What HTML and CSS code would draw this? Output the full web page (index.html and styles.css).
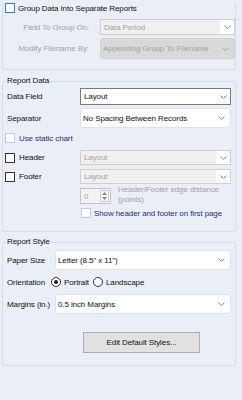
FILE: index.html
```html
<!DOCTYPE html>
<html lang="en">
  <head>
    <meta charset="UTF-8" />
    <title>Report Settings</title>
    <link rel="stylesheet" href="styles.css">
  </head>
  <body>
    <div class="group group-top">
      <div class="check-row top-check">
        <span class="box box-focus"></span>
        <span>Group Data Into Separate Reports</span>
      </div>
      <div class="row row-field">
        <span class="lbl-right dis">Field To Group On:</span>
        <div class="combo combo-std-dis">
          <span class="val dis">Data Period</span>
          <span class="arrow-area">
            <svg class="chev" viewBox="0 0 7 4" width="7" height="4"><path d="M0.5 0.5 L3.5 3.5 L6.5 0.5" /></svg>
          </span>
        </div>
      </div>
      <div class="row row-modify">
        <span class="lbl-right dis">Modify Filename By:</span>
        <div class="combo combo-list-dis">
          <span class="val dis">Appending Group To Filename</span>
          <svg class="chev" viewBox="0 0 7 4" width="7" height="4"><path d="M0.5 0.5 L3.5 3.5 L6.5 0.5" /></svg>
        </div>
      </div>
    </div>

    <fieldset class="group group-data">
      <legend>Report Data</legend>
      <div class="row row-datafield">
        <span class="lbl">Data Field</span>
        <div class="combo combo-active">
          <span class="val">Layout</span>
          <svg class="chev" viewBox="0 0 7 4" width="7" height="4"><path d="M0.5 0.5 L3.5 3.5 L6.5 0.5" /></svg>
        </div>
      </div>
      <div class="row row-sep">
        <span class="lbl">Separator</span>
        <div class="combo combo-round">
          <span class="val">No Spacing Between Records</span>
          <svg class="chev" viewBox="0 0 7 4" width="7" height="4"><path d="M0.5 0.5 L3.5 3.5 L6.5 0.5" /></svg>
        </div>
      </div>
      <div class="check-row static-check">
        <span class="box box-light"></span>
        <span class="blue">Use static chart</span>
      </div>
      <div class="row row-hf row-header">
        <span class="check-lbl"><span class="box"></span>Header</span>
        <div class="combo combo-std-dis">
          <span class="val dis">Layout</span>
          <span class="arrow-area">
            <svg class="chev" viewBox="0 0 7 4" width="7" height="4"><path d="M0.5 0.5 L3.5 3.5 L6.5 0.5" /></svg>
          </span>
        </div>
      </div>
      <div class="row row-hf row-footer">
        <span class="check-lbl"><span class="box"></span>Footer</span>
        <div class="combo combo-std-dis">
          <span class="val dis">Layout</span>
          <span class="arrow-area">
            <svg class="chev" viewBox="0 0 7 4" width="7" height="4"><path d="M0.5 0.5 L3.5 3.5 L6.5 0.5" /></svg>
          </span>
        </div>
      </div>
      <div class="spin-row">
        <div class="spin">
          <span class="dis">0</span>
          <span class="spin-btns">
            <svg viewBox="0 0 5 3" width="5" height="3"><path d="M2.5 0 L5 3 L0 3 Z" /></svg>
            <svg viewBox="0 0 5 3" width="5" height="3"><path d="M0 0 L5 0 L2.5 3 Z" /></svg>
          </span>
        </div>
        <div class="spin-text dis">Header/Footer edge distance<br />(points)</div>
      </div>
      <div class="check-row first-check">
        <span class="box box-light"></span>
        <span class="blue">Show header and footer on first page</span>
      </div>
    </fieldset>

    <fieldset class="group group-style">
      <legend>Report Style</legend>
      <div class="row row-paper">
        <span class="lbl lbl-short">Paper Size</span>
        <div class="combo combo-round">
          <span class="val">Letter (8.5" x 11")</span>
          <svg class="chev" viewBox="0 0 7 4" width="7" height="4"><path d="M0.5 0.5 L3.5 3.5 L6.5 0.5" /></svg>
        </div>
      </div>
      <div class="row row-orient">
        <span class="lbl lbl-orient">Orientation</span>
        <span class="radio radio-on"></span>
        <span class="radio-text">Portrait</span>
        <span class="radio"></span>
        <span class="radio-text">Landscape</span>
      </div>
      <div class="row row-margins">
        <span class="lbl lbl-short">Margins (in.)</span>
        <div class="combo combo-round">
          <span class="val">0.5 inch Margins</span>
          <svg class="chev" viewBox="0 0 7 4" width="7" height="4"><path d="M0.5 0.5 L3.5 3.5 L6.5 0.5" /></svg>
        </div>
      </div>
      <button class="edit-btn">Edit Default Styles...</button>
    </fieldset>
  </body>
</html>
```

FILE: styles.css
```css
* {
  box-sizing: border-box;
}

body {
  margin: 0;
  padding: 0 6px 0 2px;
  height: 400px;
  overflow: hidden;
  background: #eaeef7;
  font-family: "Liberation Sans", Arial, sans-serif;
  font-size: 8px;
  letter-spacing: -0.1px;
  color: #111;
}

.dis {
  color: #a3a3a3;
}

.blue {
  color: #2a2f78;
}

/* group boxes */
.group {
  margin: 0;
  min-width: 0;
  border: 1px solid #d6dce8;
  border-radius: 2px;
  padding: 0 4px;
}

.group legend {
  padding: 0 1px;
  margin-left: -1px;
  line-height: 10px;
  height: 10px;
  color: #111;
}

.group-top {
  border-top: none;
  height: 67px;
  padding: 0;
}

.group-data {
  margin-top: 6px;
  padding-bottom: 13px;
}

.group-style {
  margin-top: 5px;
  padding-bottom: 12px;
}

/* rows */
.row {
  display: flex;
  align-items: center;
}

.lbl {
  width: 73px;
  flex: none;
}

.lbl-short {
  width: 48px;
}

.lbl-right {
  width: 86px;
  margin-right: 11px;
  text-align: right;
  flex: none;
}

.check-row {
  display: flex;
  align-items: center;
  gap: 4px;
  height: 10px;
}

.box {
  width: 10px;
  height: 10px;
  border: 1px solid #333;
  background: #fff;
  flex: none;
}

.box-focus {
  border-color: #3b78d0;
}

.box-light {
  border-color: #c9c9c9;
}

.top-check {
  margin: 3px 0 0 2px;
  gap: 3px;
}

.row-field {
  margin-top: 6px;
  height: 16px;
}

.row-modify {
  margin-top: 3px;
  height: 21px;
}

.row-datafield {
  margin-top: 2px;
  height: 17px;
}

.row-sep {
  margin-top: 3px;
  height: 20px;
}

.static-check {
  margin: 5px 0 0 -2px;
}

.row-hf {
  margin-left: -2px;
  height: 15px;
}

.row-header {
  margin-top: 7px;
}

.row-footer {
  margin-top: 4px;
}

.check-lbl {
  width: 75px;
  flex: none;
  display: flex;
  align-items: center;
  gap: 4px;
}

/* combo boxes */
.combo {
  flex: 1;
  height: 100%;
  display: flex;
  align-items: center;
  justify-content: space-between;
  padding-left: 3px;
  padding-right: 3px;
  overflow: hidden;
  white-space: nowrap;
}

.chev {
  flex: none;
}

.chev path {
  fill: none;
  stroke: #8c8c8c;
  stroke-width: 1;
}

.combo-std-dis {
  background: #f0f0f0;
  border: 1px solid #cfcfcf;
  padding-right: 0;
}

.arrow-area {
  width: 14px;
  height: 100%;
  background: #fff;
  display: flex;
  align-items: center;
  justify-content: center;
}

.combo-list-dis {
  background: #d9d9d9;
  border: 1px solid #d2d2d2;
  border-radius: 3px;
  padding-left: 2px;
  padding-right: 5px;
}

.combo-list-dis .chev path {
  stroke: #a5a5a5;
}

.combo-active {
  background: #fff;
  border: 1px solid #7a7a7a;
}

.combo-round {
  background: #fff;
  border: 1px solid #dde1ea;
  border-radius: 3px;
  padding-left: 2px;
  padding-right: 5px;
}

/* spinner */
.spin-row {
  display: flex;
  margin: 4px 0 0 73px;
}

.spin {
  width: 31px;
  height: 16px;
  flex: none;
  display: flex;
  align-items: center;
  justify-content: space-between;
  padding: 0 1px 0 3px;
  background: #f3f3f3;
  border: 1px solid #c4c4c4;
}

.spin-btns {
  width: 9px;
  height: 12px;
  display: flex;
  flex-direction: column;
  align-items: center;
  justify-content: space-around;
  border: 1px solid #d0d0d0;
  background: #f7f7f7;
}

.spin-btns path {
  fill: #8a8a8a;
}

.spin-text {
  margin: -3px 0 0 7px;
  line-height: 10px;
}

.first-check {
  margin: 3px 0 0 74px;
  gap: 3px;
}

/* orientation */
.row-paper {
  margin-top: 3px;
  height: 20px;
}

.row-orient {
  margin-top: 7px;
  height: 10px;
}

.lbl-orient {
  width: 44px;
}

.radio {
  width: 10px;
  height: 10px;
  border: 1px solid #333;
  border-radius: 50%;
  background: #fff;
  flex: none;
  display: flex;
  align-items: center;
  justify-content: center;
}

.radio-on::after {
  content: "";
  width: 4px;
  height: 4px;
  border-radius: 50%;
  background: #222;
}

.radio-text {
  margin: 0 4px 0 3px;
}

.row-margins {
  margin-top: 7px;
  height: 20px;
}

.edit-btn {
  display: block;
  margin: 18px 0 0 76px;
  width: 117px;
  height: 21px;
  padding: 0;
  background: #e1e1e1;
  border: 1px solid #adadad;
  font-family: "Liberation Sans", Arial, sans-serif;
  font-size: 8px;
  letter-spacing: -0.1px;
  color: #111;
}
```
